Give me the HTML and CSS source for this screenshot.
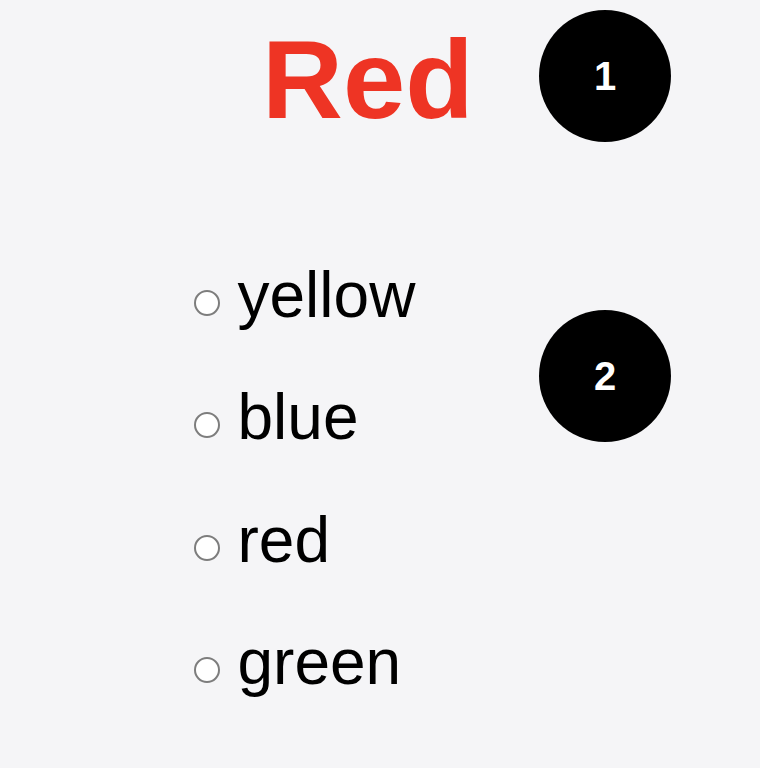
FILE: index.html
```html
<!DOCTYPE html>
<html lang="en">
<head>
<meta charset="utf-8">
<title>Quiz</title>
<link rel="stylesheet" href="styles.css">
</head>
<body>
<main class="stage">
  <section class="quiz">
    <h1 class="title">Red</h1>
    <ul class="options">
      <li class="option"><span class="radio"></span><span class="label">yellow</span></li>
      <li class="option"><span class="radio"></span><span class="label">blue</span></li>
      <li class="option"><span class="radio"></span><span class="label">red</span></li>
      <li class="option"><span class="radio"></span><span class="label">green</span></li>
    </ul>
  </section>
  <aside class="markers">
    <span class="marker">1</span>
    <span class="marker">2</span>
  </aside>
</main>
</body>
</html>
```
FILE: styles.css
```css
html, body {
  margin: 0;
  padding: 0;
  background: #f5f5f7;
}
body {
  font-family: "Liberation Sans", Arial, sans-serif;
  color: #000;
  width: 760px;
  height: 768px;
  overflow: hidden;
}
.stage {
  display: flex;
  align-items: flex-start;
}
.quiz {
  flex: 0 0 539px;
  display: flex;
  flex-direction: column;
}
.title {
  margin: 24px 0 0 262px;
  font-size: 112px;
  line-height: 112px;
  font-weight: 700;
  color: #ee3424;
}
.options {
  list-style: none;
  margin: 126.5px 0 0 194px;
  padding: 0;
  display: flex;
  flex-direction: column;
  gap: 58.67px;
}
.option {
  font-size: 64px;
  line-height: 64px;
  height: 64px;
  white-space: nowrap;
}
.radio {
  display: inline-block;
  box-sizing: border-box;
  width: 26px;
  height: 26px;
  border: 2px solid #7d7d7d;
  border-radius: 50%;
  background: #fff;
  margin: 0 17.5px 1px 0;
  vertical-align: baseline;
}
.markers {
  display: flex;
  flex-direction: column;
  gap: 168px;
  padding-top: 10px;
}
.marker {
  width: 132px;
  height: 132px;
  border-radius: 50%;
  background: #000;
  color: #fff;
  font-size: 40px;
  line-height: 1;
  font-weight: 700;
  display: flex;
  align-items: center;
  justify-content: center;
}
```
